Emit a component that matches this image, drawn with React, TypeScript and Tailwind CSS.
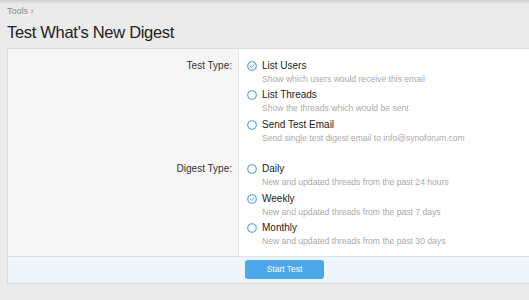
import React from "react";

function Radio({ checked }: { checked?: boolean }) {
  return (
    <svg width="10" height="10" viewBox="0 0 10 10" className="shrink-0">
      <circle cx="5" cy="5" r="4.3" fill="white" stroke="#4aa3e6" strokeWidth="1.1" />
      {checked && (
        <path d="M3 5.2 L4.4 6.5 L7 3.8" fill="none" stroke="#4aa3e6" strokeWidth="1" strokeLinecap="round" strokeLinejoin="round" />
      )}
    </svg>
  );
}

function Option({ title, desc, checked }: { title: string; desc: string; checked?: boolean }) {
  return (
    <div className="flex flex-col">
      <div className="flex items-center h-[16px]">
        <Radio checked={checked} />
        <span className="ml-[5px] text-[10px] leading-[16px] text-[#222]">{title}</span>
      </div>
      <div className="pl-[15px] text-[8.6px] leading-[10.5px] text-[#aaaaaa]">{desc}</div>
    </div>
  );
}

function Row({ label, children }: { label: string; children: React.ReactNode }) {
  return (
    <div className="flex">
      <div className="w-[231px] shrink-0 pr-[7px] text-right text-[10px] leading-[16px] text-[#333]">{label}</div>
      <div className="flex flex-col gap-[2.9px] pl-[8px]">{children}</div>
    </div>
  );
}

export default function App() {
  return (
    <div
      className="w-[529px] h-[300px] overflow-hidden bg-[#ebebeb] relative"
      style={{ fontFamily: '"Liberation Sans", Arial, sans-serif' }}
    >
      <div className="absolute top-0 left-0 right-0 h-[4px] bg-gradient-to-b from-[#cfcfcf] to-[#ebebeb]" />
      <div className="pl-[7px] pt-[5px]">
        <div className="text-[9px] leading-[12px] text-[#8a8a8a]">Tools ›</div>
        <div className="mt-[5px] text-[16.5px] leading-[20px] tracking-[-0.3px] text-[#222]">Test What's New Digest</div>
      </div>
      <div className="ml-[7px] mt-[6px] border border-r-0 border-[#dedede] border-b-[#d4dbe2] bg-[#f5f5f5]">
        <div className="relative flex flex-col gap-[18px] pt-[9px] pb-[9px]">
          <div className="absolute top-0 bottom-0 left-[230px] right-0 bg-white border-l border-[#e4e4e4]" />
          <div className="relative">
            <Row label="Test Type:">
              <Option title="List Users" desc="Show which users would receive this email" checked />
              <Option title="List Threads" desc="Show the threads which would be sent" />
              <Option title="Send Test Email" desc="Send single test digest email to info@synoforum.com" />
            </Row>
          </div>
          <div className="relative">
            <Row label="Digest Type:">
              <Option title="Daily" desc="New and updated threads from the past 24 hours" />
              <Option title="Weekly" desc="New and updated threads from the past 7 days" checked />
              <Option title="Monthly" desc="New and updated threads from the past 30 days" />
            </Row>
          </div>
        </div>
        <div className="border-t border-[#dbe4ee] bg-[#edf5fd] h-[27px] flex items-center pl-[237px]">
          <button className="w-[79px] h-[19px] rounded-[3px] bg-[#4ba8ea] text-white text-[8.5px] leading-[19px]">
            Start Test
          </button>
        </div>
      </div>
    </div>
  );
}
